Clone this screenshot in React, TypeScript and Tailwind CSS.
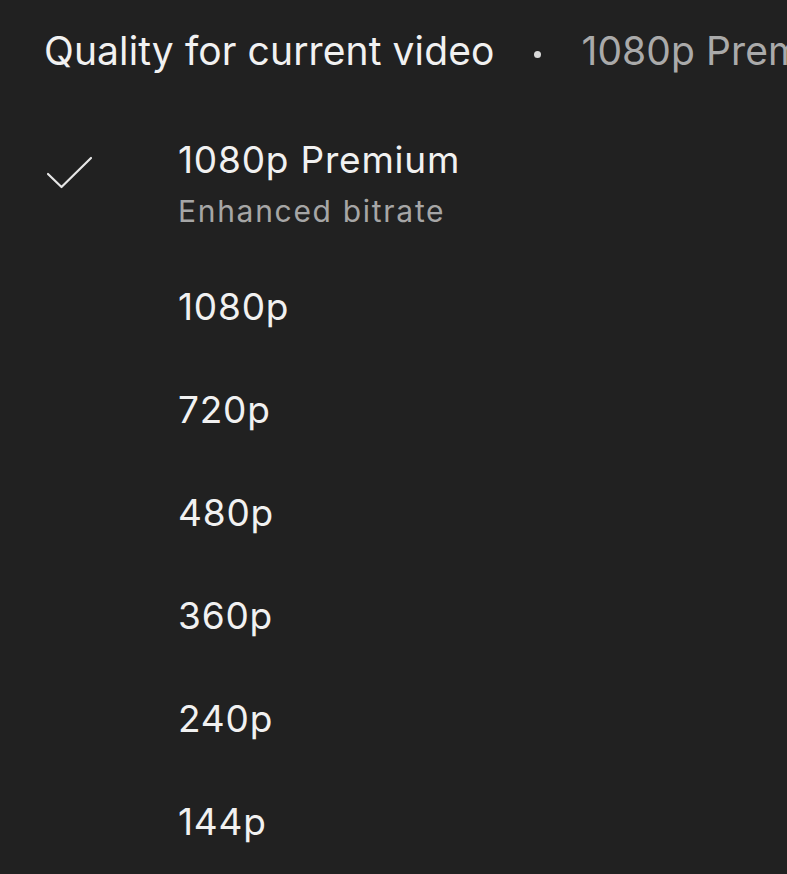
import React from 'react';

const qualities = ['1080p', '720p', '480p', '360p', '240p', '144p'];

function CheckMark() {
  return (
    <svg width="48" height="36" viewBox="0 0 48 36" fill="none">
      <path
        d="M2 18 L15.5 31 L45 2"
        stroke="#e6e6e6"
        strokeWidth="2.2"
        strokeLinecap="round"
        strokeLinejoin="round"
      />
    </svg>
  );
}

export default function App() {
  return (
    <div className="w-[787px] h-[874px] overflow-hidden bg-[#212121] font-['Inter',sans-serif] antialiased">
      {/* Header */}
      <div className="flex items-center whitespace-nowrap pl-[44px] pt-[27px] text-[39px] leading-[48px] tracking-[0.1px]">
        <span className="text-[#f1f1f1]">Quality for current video</span>
        <span className="ml-[40px] mr-[40px] mt-[6px] h-[7px] w-[7px] shrink-0 rounded-full bg-[#d9d9d9]" />
        <span className="text-[#aaaaaa]">1080p Premium</span>
      </div>

      {/* Options */}
      <div className="mt-[63px]">
        <div className="flex">
          <div className="w-[178px] shrink-0 pl-[46px] pt-[18px]">
            <CheckMark />
          </div>
          <div className="flex flex-col">
            <span className="text-[37px] leading-[44px] tracking-[0.8px] text-[#f1f1f1]">1080p Premium</span>
            <span className="mt-[11px] text-[30px] leading-[36px] tracking-[1.7px] text-[#a6a6a6]">Enhanced bitrate</span>
          </div>
        </div>

        <div className="mt-[26px]">
          {qualities.map((q) => (
            <div key={q} className="flex h-[103px] items-center pl-[178px]">
              <span className="text-[37px] leading-[44px] tracking-[0.8px] text-[#f1f1f1]">{q}</span>
            </div>
          ))}
        </div>
      </div>
    </div>
  );
}
